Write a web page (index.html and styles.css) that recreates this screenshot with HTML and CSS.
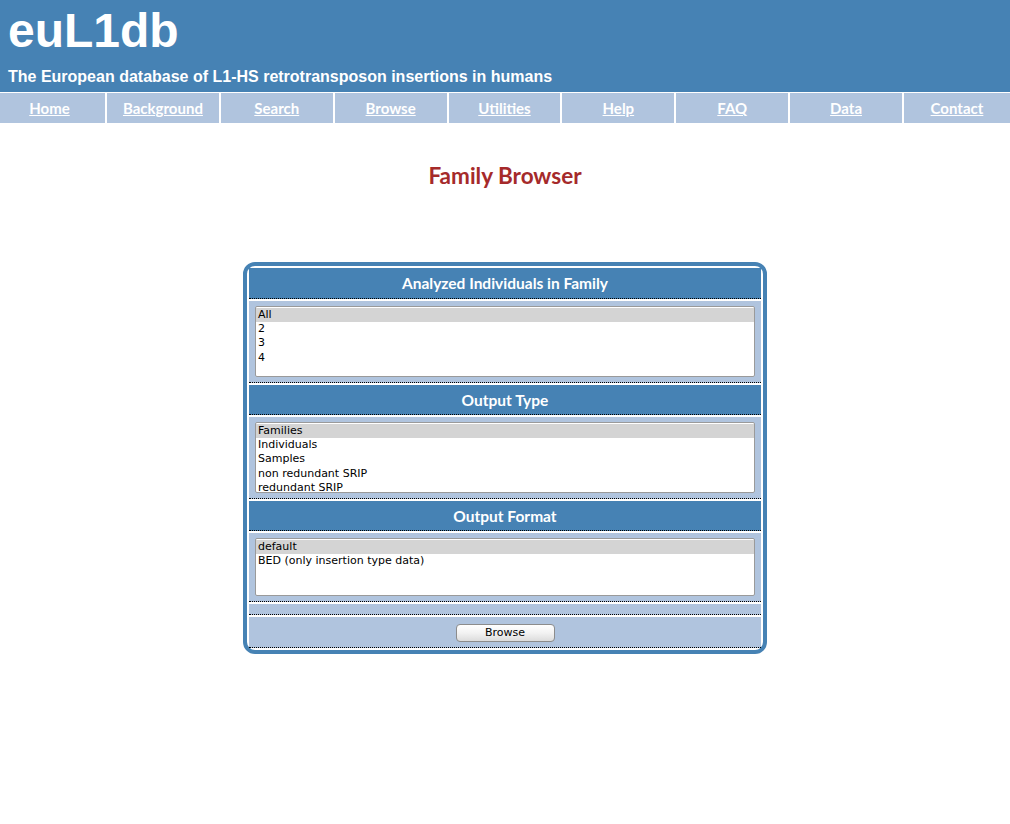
FILE: index.html
```html
<!DOCTYPE html>
<html lang="en">

<head>
    <meta charset="utf-8">
    <title>euL1db - Family Browser</title>
    <link rel="stylesheet" href="styles.css">
</head>

<body>

    <header class="banner">
        <h1>euL1db</h1>
        <p class="tagline">The European database of L1-HS retrotransposon insertions in humans</p>
    </header>

    <nav class="menu">
        <a href="#">Home</a>
        <a href="#">Background</a>
        <a href="#">Search</a>
        <a href="#">Browse</a>
        <a href="#">Utilities</a>
        <a href="#">Help</a>
        <a href="#">FAQ</a>
        <a href="#">Data</a>
        <a href="#">Contact</a>
    </nav>

    <h2 class="title">Family Browser</h2>

    <form class="browser">
        <table class="panel">
            <tr>
                <th class="first">Analyzed Individuals in Family</th>
            </tr>
            <tr>
                <td class="field">
                    <select name="individuals" size="4" class="list">
                        <option selected>All</option>
                        <option>2</option>
                        <option>3</option>
                        <option>4</option>
                    </select>
                </td>
            </tr>
            <tr>
                <th>Output Type</th>
            </tr>
            <tr>
                <td class="field">
                    <select name="type" size="5" class="list">
                        <option selected>Families</option>
                        <option>Individuals</option>
                        <option>Samples</option>
                        <option>non redundant SRIP</option>
                        <option>redundant SRIP</option>
                    </select>
                </td>
            </tr>
            <tr>
                <th>Output Format</th>
            </tr>
            <tr>
                <td class="field">
                    <select name="format" size="4" class="list short">
                        <option selected>default</option>
                        <option>BED (only insertion type data)</option>
                    </select>
                </td>
            </tr>
            <tr>
                <td class="spacer"></td>
            </tr>
            <tr>
                <td class="actions">
                    <button type="button" class="submit">Browse</button>
                </td>
            </tr>
        </table>
    </form>

</body>

</html>
```

FILE: styles.css
```css
body {
    margin: 0;
    background-color: white;
    font-family: "Liberation Sans", Arial, sans-serif;
}

/* top banner */
.banner {
    background-color: #4682b4;
    color: white;
    padding: 3px 8px 6px;
    border-bottom: 1px solid white;
}

.banner h1 {
    margin: 0;
    font-size: 48px;
    line-height: 55px;
    font-weight: bold;
}

.tagline {
    margin: 10px 0 0;
    font-size: 16px;
    line-height: 18px;
    font-weight: bold;
}

/* menu */
.menu {
    display: grid;
    grid-template-columns: 105px repeat(7, 1fr) 106px;
    gap: 2px;
    background-color: white;
}

.menu a {
    background-color: #b0c4de;
    color: white;
    font-family: Lato, "Open Sans", sans-serif;
    font-weight: bold;
    font-size: 15px;
    text-align: center;
    line-height: 30px;
}

.menu a:first-child {
    padding-right: 6px;
}

.title {
    margin: 38px 0 0;
    text-align: center;
    color: #a52a2a;
    font-family: Lato, "Open Sans", sans-serif;
    font-size: 22.5px;
    line-height: 30px;
}

/* browser form */
.browser {
    margin-top: 71px;
}

.panel {
    margin: 0 auto;
    width: 523px;
    border: 4px solid #4682b4;
    border-radius: 12px;
    border-spacing: 2px;
    background-color: white;
}

.panel th,
.panel td {
    padding: 0;
    border-bottom: 1px dotted black;
}

.panel th {
    background-color: #4682b4;
    color: white;
    height: 29px;
    font-family: Lato, "Open Sans", sans-serif;
    font-size: 15.5px;
}

.panel th.first {
    height: 30px;
}

.panel td {
    background-color: #b0c4de;
}

.field {
    padding: 5px 6px !important;
}

.list {
    display: block;
    width: 500px;
    height: 71px;
    margin: 0;
    padding-top: 1px;
    border: 1px solid #9a9a9a;
    font-family: "DejaVu Sans", sans-serif;
    font-size: 11px;
    color: black;
    overflow: hidden;
}

.list.short {
    height: 58px;
}

.list option {
    padding: 0 2px 1px;
}

.list option:checked {
    background: linear-gradient(#d4d4d4, #d4d4d4);
    color: black;
}

.spacer {
    height: 10px;
}

.actions {
    height: 30px;
    text-align: center;
}

.submit {
    width: 99px;
    height: 18px;
    margin-top: 1px;
    padding: 0;
    border: 1px solid #8c8c8c;
    border-radius: 4px;
    background: linear-gradient(to bottom, #ffffff 0%, #f2f2f2 50%, #dcdcdc 100%);
    font-family: "DejaVu Sans", sans-serif;
    font-size: 11px;
    color: black;
}
```
